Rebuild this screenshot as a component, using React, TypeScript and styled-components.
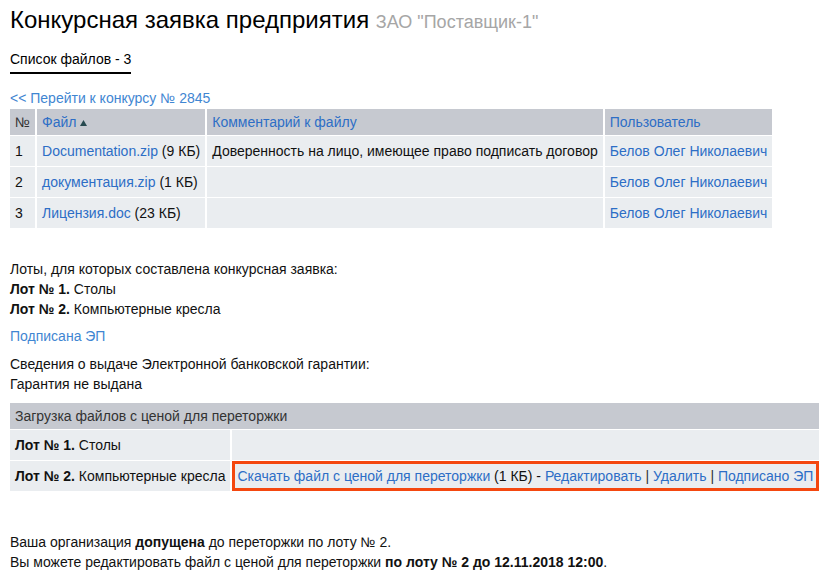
import React from "react";
import styled, { createGlobalStyle } from "styled-components";

const Global = createGlobalStyle`
  html, body { margin: 0; padding: 0; background: #fff; }
  body {
    font-family: "Liberation Sans", Arial, sans-serif;
    font-size: 14px;
    color: #111;
  }
`;

const Page = styled.div`
  padding: 0 12px 0 10px;
  width: 809px;
`;

const Title = styled.h1`
  margin: 6px 0 0;
  font-size: 24px;
  font-weight: normal;
  line-height: 28px;
  color: #000;
`;

const Sub = styled.span`
  font-size: 18px;
  color: #a6a6a6;
`;

const Tab = styled.div`
  display: inline-block;
  margin-top: 13px;
  line-height: 20px;
  padding-bottom: 3px;
  border-bottom: 2px solid #000;
  color: #000;
`;

const Link = styled.a<{ $light?: boolean }>`
  color: ${(p) => (p.$light ? "#3f86d2" : "#2d6ec6")};
  text-decoration: none;
  cursor: pointer;
`;

const Line = styled.div<{ $top?: number }>`
  line-height: 20px;
  margin-top: ${(p) => p.$top ?? 0}px;
`;

const Table = styled.table<{ $full?: boolean }>`
  border-collapse: separate;
  border-spacing: 2px 1px;
  margin: 0 -2px;
  width: ${(p) => (p.$full ? "calc(100% + 4px)" : "auto")};
  font-size: 14px;
`;

const Th = styled.th`
  background: #c6c9d0;
  height: 26px;
  padding: 0 5px;
  text-align: left;
  font-weight: normal;
  color: #333;
  white-space: nowrap;
`;

const Td = styled.td<{ $marked?: boolean }>`
  background: #eaedf0;
  height: 30px;
  padding: 0 ${(p) => (p.$marked ? 2 : 5)}px;
  white-space: nowrap;
  border: ${(p) => (p.$marked ? "3px solid #f4470f" : "none")};
  box-sizing: border-box;
`;

const Sort = styled.svg`
  margin-left: 4px;
  vertical-align: 1px;
`;

const Sep = styled.span`
  color: #333;
`;

const files = [
  { n: 1, name: "Documentation.zip", size: "9 КБ", comment: "Доверенность на лицо, имеющее право подписать договор" },
  { n: 2, name: "документация.zip", size: "1 КБ", comment: "" },
  { n: 3, name: "Лицензия.doc", size: "23 КБ", comment: "" },
];

export default function App() {
  return (
    <>
      <Global />
      <Page>
        <Title>
          Конкурсная заявка предприятия <Sub>ЗАО "Поставщик-1"</Sub>
        </Title>
        <Tab>Список файлов - 3</Tab>
        <Line $top={14}>
          <Link $light>&lt;&lt; Перейти к конкурсу № 2845</Link>
        </Line>
        <Table>
          <thead>
            <tr>
              <Th>№</Th>
              <Th>
                <Link>Файл</Link>
                <Sort width="7" height="6" viewBox="0 0 7 6">
                  <polygon points="3.5,0 7,6 0,6" fill="#274a50" />
                </Sort>
              </Th>
              <Th>
                <Link>Комментарий к файлу</Link>
              </Th>
              <Th>
                <Link>Пользователь</Link>
              </Th>
            </tr>
          </thead>
          <tbody>
            {files.map((f) => (
              <tr key={f.n}>
                <Td>{f.n}</Td>
                <Td>
                  <Link>{f.name}</Link> ({f.size})
                </Td>
                <Td>{f.comment}</Td>
                <Td>
                  <Link>Белов Олег Николаевич</Link>
                </Td>
              </tr>
            ))}
          </tbody>
        </Table>

        <Line $top={30}>Лоты, для которых составлена конкурсная заявка:</Line>
        <Line>
          <b>Лот № 1.</b> Столы
        </Line>
        <Line>
          <b>Лот № 2.</b> Компьютерные кресла
        </Line>
        <Line $top={7}>
          <Link $light>Подписана ЭП</Link>
        </Line>
        <Line $top={8}>Сведения о выдаче Электронной банковской гарантии:</Line>
        <Line $top={0}>Гарантия не выдана</Line>

        <Table $full style={{ marginTop: 8 }}>
          <thead>
            <tr>
              <Th colSpan={2}>Загрузка файлов с ценой для переторжки</Th>
            </tr>
          </thead>
          <tbody>
            <tr>
              <Td style={{ width: 1 }}>
                <b>Лот № 1.</b> Столы
              </Td>
              <Td></Td>
            </tr>
            <tr>
              <Td>
                <b>Лот № 2.</b> Компьютерные кресла
              </Td>
              <Td $marked>
                <Link>Скачать файл с ценой для переторжки</Link> (1 КБ) -{" "}
                <Link>Редактировать</Link> <Sep>|</Sep> <Link>Удалить</Link>{" "}
                <Sep>|</Sep> <Link>Подписано ЭП</Link>
              </Td>
            </tr>
          </tbody>
        </Table>

        <Line $top={40}>
          Ваша организация <b>допущена</b> до переторжки по лоту № 2.
        </Line>
        <Line>
          Вы можете редактировать файл с ценой для переторжки{" "}
          <b>по лоту № 2 до 12.11.2018 12:00</b>.
        </Line>
      </Page>
    </>
  );
}
